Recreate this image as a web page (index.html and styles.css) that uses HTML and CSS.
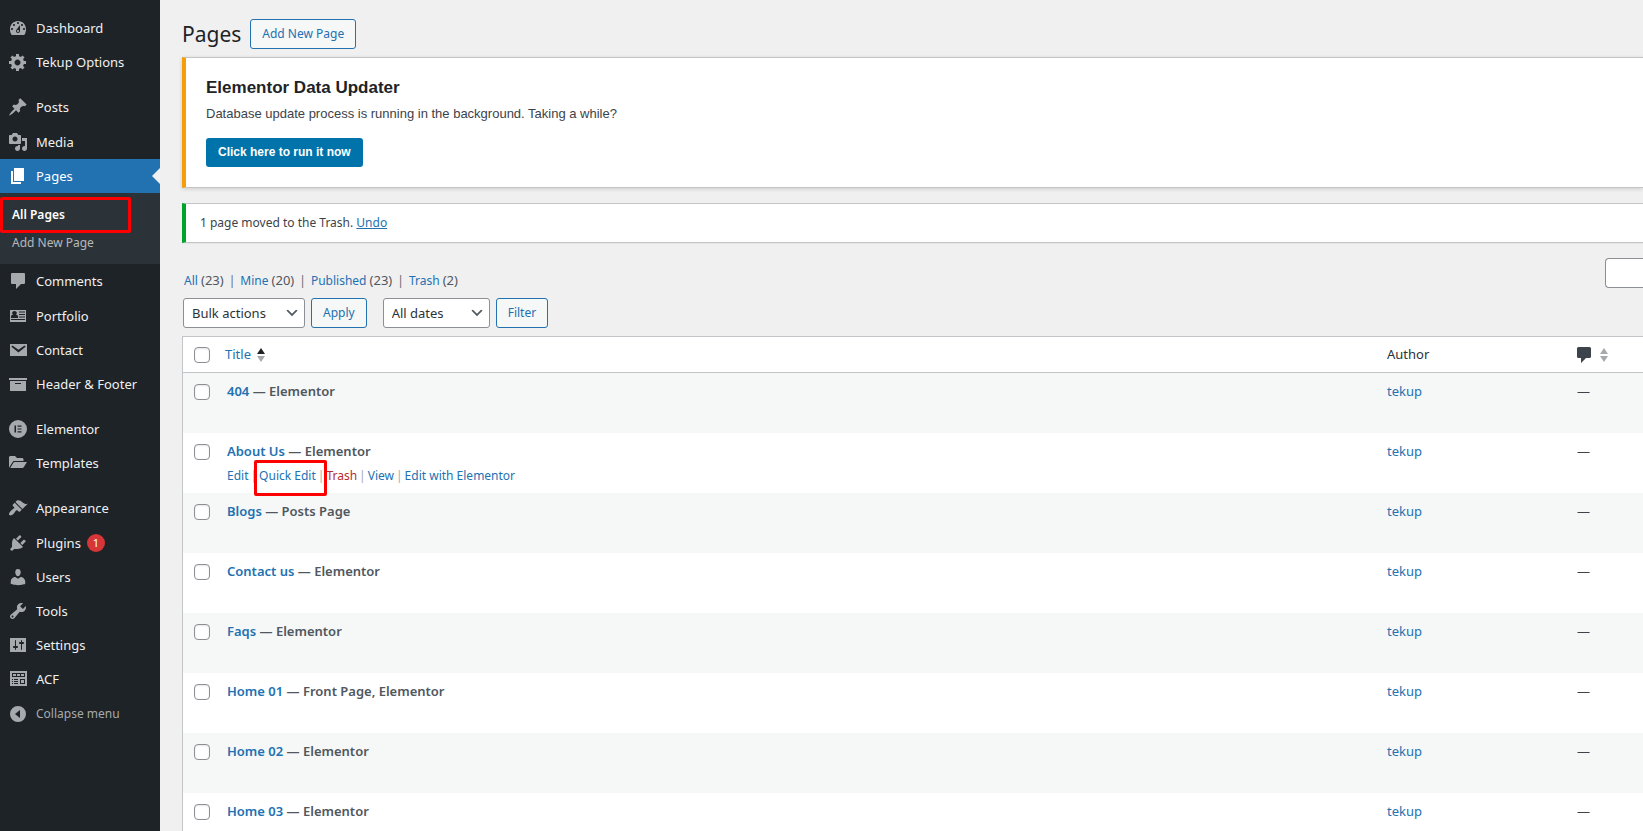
FILE: index.html
```html
<!DOCTYPE html>
<html lang="en">
<head>
<meta charset="utf-8">
<title>Pages</title>
<link rel="stylesheet" href="styles.css">
</head>
<body>
<div class="admin">
  <nav class="menu" aria-label="Main menu">
    <ul class="menu-group">
      <li><a class="menu-item" href="#"><svg class="icon" viewBox="0 0 20 20"><path fill-rule="evenodd" d="M3.76 17h12.48c1.34-1.63 1.76-3.48 1.76-6 0-4.42-3.58-8-8-8s-8 3.58-8 8c0 2.52.42 4.37 1.76 6zM10 4c.55 0 1 .45 1 1s-.45 1-1 1-1-.45-1-1 .45-1 1-1zM6 6c.55 0 1 .45 1 1s-.45 1-1 1-1-.45-1-1 .45-1 1-1zm8 0c.55 0 1 .45 1 1s-.45 1-1 1-1-.45-1-1 .45-1 1-1zm-5.37 5.55L12 7v6c0 1.1-.9 2-2 2s-2-.9-2-2c0-.57.24-1.08.63-1.45zM4 10c.55 0 1 .45 1 1s-.45 1-1 1-1-.45-1-1 .45-1 1-1zm12 0c.55 0 1 .45 1 1s-.45 1-1 1-1-.45-1-1 .45-1 1-1zm-5 3c0-.55-.45-1-1-1s-1 .45-1 1 .45 1 1 1 1-.45 1-1z"/></svg>Dashboard</a></li>
      <li><a class="menu-item" href="#"><svg class="icon" viewBox="0 0 20 20"><path fill-rule="evenodd" d="M18 12h-2.180c-.17.7-.44 1.35-.81 1.930l1.540 1.540-2.100 2.100-1.540-1.540c-.58.36-1.230.63-1.910.79V19H8v-2.180c-.68-.16-1.330-.43-1.910-.79l-1.540 1.540-2.120-2.120 1.540-1.540c-.36-.58-.63-1.230-.79-1.910H1V9.030h2.170c.16-.7.44-1.350.8-1.940L2.430 5.550l2.100-2.100 1.540 1.540c.58-.37 1.240-.64 1.930-.81V2h3v2.180c.68.16 1.330.43 1.910.79l1.540-1.540 2.120 2.120-1.540 1.540c.36.59.64 1.240.8 1.940H18V12zm-8.500 1.500c1.660 0 3-1.340 3-3s-1.340-3-3-3-3 1.340-3 3 1.340 3 3 3z"/></svg>Tekup Options</a></li>
    </ul>
    <ul class="menu-group">
      <li><a class="menu-item tall" href="#"><svg class="icon" viewBox="0 0 20 20"><path d="M10.440 3.020l1.820-1.820 6.360 6.350-1.830 1.820c-1.050-.68-2.480-.57-3.410.36l-.75.75c-.92.93-1.040 2.350-.35 3.410l-1.830 1.820-2.410-2.410-2.800 2.790c-.42.42-3.380 2.710-3.800 2.290s1.860-3.390 2.280-3.810l2.790-2.790L4.100 9.360l1.830-1.820c1.050.69 2.480.57 3.400-.36l.75-.75c.93-.92 1.050-2.350.36-3.410z"/></svg>Posts</a></li>
      <li><a class="menu-item" href="#"><svg class="icon" viewBox="0 0 20 20"><path fill-rule="evenodd" d="M13 11V4c0-.55-.45-1-1-1h-1.670L9 1H5L3.670 3H2c-.55 0-1 .45-1 1v7c0 .55.45 1 1 1h10c.55 0 1-.45 1-1zM7 4.500c1.380 0 2.500 1.120 2.500 2.500S8.380 9.500 7 9.500 4.500 8.380 4.500 7 5.620 4.500 7 4.500zM14 6h5v10.500c0 1.380-1.120 2.500-2.500 2.500S14 17.880 14 16.500s1.120-2.500 2.500-2.500c.17 0 .34.02.5.05V9h-3V6zm-4 8.050V13h2v3.500c0 1.380-1.120 2.500-2.500 2.500S7 17.880 7 16.500 8.120 14 9.500 14c.17 0 .34.02.5.05z"/></svg>Media</a></li>
      <li>
        <a class="menu-item current" href="#" aria-current="true"><svg class="icon" viewBox="0 0 20 20"><path d="M6 15V2h10v13H6zm-1 1h8v2H3V5h2v11z"/></svg>Pages</a>
        <ul class="submenu">
          <li><a class="submenu-item active marked" href="#">All Pages</a></li>
          <li><a class="submenu-item" href="#">Add New Page</a></li>
        </ul>
      </li>
      <li><a class="menu-item tall" href="#"><svg class="icon" viewBox="0 0 20 20"><path d="M4 2h12a1 1 0 0 1 1 1v9a1 1 0 0 1-1 1h-3l-5 5v-5H4a1 1 0 0 1-1-1V3a1 1 0 0 1 1-1z"/></svg>Comments</a></li>
      <li><a class="menu-item" href="#"><svg class="icon" viewBox="0 0 20 20"><path fill-rule="evenodd" d="M2 4h16v12H2zM11 5.500v1h6v-1zM11 8v1h6V8zM11 10.500v1h6v-1zM3 14h14v-1H3zM3 12h7v-1.500c0-1-1-1.700-2-1.700.6-.5.800-1.100.8-1.800C8.800 6 8.200 5 6.500 5S4.200 6 4.200 7c0 .7.200 1.300.8 1.800-1 0-2 .7-2 1.700z"/></svg>Portfolio</a></li>
      <li><a class="menu-item" href="#"><svg class="icon" viewBox="0 0 20 20"><path fill-rule="evenodd" d="M2 4h17v12H2zm8.490 8.600l6.740-5.530c.24-.2.43-.66.13-1.070-.29-.41-.82-.42-1.170-.17l-5.700 3.860L4.800 5.830c-.35-.25-.88-.24-1.170.17-.3.41-.11.87.13 1.070z"/></svg>Contact</a></li>
      <li><a class="menu-item" href="#"><svg class="icon" viewBox="0 0 20 20"><path fill-rule="evenodd" d="M19 4v2H1V4h18zM2 7h16v10H2V7zm11 3V9H7v1h6z"/></svg>Header &amp; Footer</a></li>
    </ul>
    <ul class="menu-group">
      <li><a class="menu-item" href="#"><svg class="icon" viewBox="0 0 20 20"><path fill-rule="evenodd" d="M10 1a9 9 0 1 0 0 18 9 9 0 0 0 0-18zM6.500 6.500H8v7H6.500zM9.500 6.500h4v1.200h-4zM9.500 9.400h4v1.200h-4zM9.500 12.300h4v1.200h-4z"/></svg>Elementor</a></li>
      <li><a class="menu-item" href="#"><svg class="icon" viewBox="0 0 20 20"><path d="M1 4.500C1 3.600 1.600 3 2.500 3H7l2 2h5c.9 0 1.500.6 1.500 1.500V8H6.500c-1 0-1.600.4-2 1.200L1 14.800z"/><path d="M6.700 9H19l-3.300 5.300c-.3.500-.7.700-1.300.7H2.200l3.200-5.300c.3-.5.700-.7 1.300-.7z"/></svg>Templates</a></li>
    </ul>
    <ul class="menu-group">
      <li><a class="menu-item tall" href="#"><svg class="icon" viewBox="0 0 20 20"><path d="M14.480 11.060L7.410 3.990l1.500-1.500c.5-.56 2.300-.47 3.510.32 1.210.8 1.430 1.280 2.910 2.100 1.180.64 2.450 1.260 4.450.85zm-.71.71L6.700 4.700 4.930 6.470c-.39.39-.39 1.020 0 1.410l1.060 1.060c.39.39.39 1.030 0 1.420-.6.6-1.430 1.110-2.210 1.690-.35.26-.7.53-1.010.84C1.430 14.230.4 16.080 1.400 17.070c.99 1 2.840-.03 4.180-1.360.31-.31.58-.66.85-1.020.57-.78 1.080-1.610 1.690-2.210.39-.39 1.020-.39 1.410 0l1.060 1.060c.39.39 1.020.39 1.410 0z"/></svg>Appearance</a></li>
      <li><a class="menu-item" href="#"><svg class="icon" viewBox="0 0 20 20"><path d="M13.110 4.360L9.870 7.600 8 5.730l3.240-3.240c.35-.34 1.050-.2 1.560.32.52.51.66 1.210.31 1.550zm-8 1.770l.91-1.120 9.010 9.010-1.190.84c-.71.71-2.630 1.160-3.820 1.160H6.140L4.900 17.260c-.59.59-1.540.59-2.120 0-.59-.58-.59-1.530 0-2.120l1.240-1.240v-3.880c0-1.130.4-3.190 1.090-3.890zm7.260 3.970l3.240-3.240c.34-.35 1.040-.21 1.550.31.52.51.66 1.210.31 1.550l-3.240 3.250z"/></svg>Plugins<span class="badge">1</span></a></li>
      <li><a class="menu-item" href="#"><svg class="icon" viewBox="0 0 20 20"><path d="M10 9.250c-2.270 0-2.730-3.440-2.730-3.440C7 4.020 7.820 2 9.970 2c2.160 0 2.980 2.020 2.710 3.810 0 0-.41 3.440-2.680 3.440zm0 2.570L12.720 10c2.390 0 4.520 2.330 4.520 4.530v2.490s-3.650 1.130-7.240 1.130c-3.650 0-7.240-1.130-7.240-1.130v-2.490c0-2.250 1.940-4.480 4.470-4.480z"/></svg>Users</a></li>
      <li><a class="menu-item" href="#"><svg class="icon" viewBox="0 0 20 20"><path fill-rule="evenodd" d="M16.680 9.770c-1.340 1.340-3.300 1.670-4.950.99l-5.410 6.520c-.99.99-2.590.99-3.580 0s-.99-2.590 0-3.570l6.520-5.420c-.68-1.650-.35-3.610.99-4.950 1.280-1.280 3.120-1.620 4.720-1.060l-2.890 2.890 2.820 2.820 2.860-2.870c.53 1.580.18 3.390-1.080 4.650zM3.810 16.210c.4.39 1.040.39 1.430 0 .4-.4.4-1.040 0-1.430-.39-.4-1.030-.4-1.430 0-.39.39-.39 1.030 0 1.430z"/></svg>Tools</a></li>
      <li><a class="menu-item" href="#"><svg class="icon" viewBox="0 0 20 20"><path fill-rule="evenodd" d="M18 17V3H2v14zM8 11h1c.55 0 1 .45 1 1s-.45 1-1 1H8v1.500c0 .28-.22.5-.5.5s-.5-.22-.5-.5V13H6c-.55 0-1-.45-1-1s.45-1 1-1h1V5.500c0-.28.22-.5.5-.5s.5.22.5.5V11zm5-2h-1c-.55 0-1-.45-1-1s.45-1 1-1h1V5.500c0-.28.22-.5.5-.5s.5.22.5.5V7h1c.55 0 1 .45 1 1s-.45 1-1 1h-1v5.500c0 .28-.22.5-.5.5s-.5-.22-.5-.5V9z"/></svg>Settings</a></li>
      <li><a class="menu-item tall" href="#"><svg class="icon" viewBox="0 0 20 20"><path fill-rule="evenodd" d="M2 2h17v15H2zM4 4v4h13V4zM5 5h3v2H5zM9 5h3v2H9zM13 5h3v2h-3zM4 10v1h1v-1zM6 10v1h4v-1zM4 12v1h1v-1zM6 12v1h4v-1zM4 14v1h1v-1zM6 14v1h4v-1zM12 10v5h5v-5zM13 11h3v3h-3z"/></svg>ACF</a></li>
      <li><button class="menu-item collapse" type="button"><svg class="icon" viewBox="0 0 20 20"><path fill-rule="evenodd" d="M10 2a8 8 0 1 0 0 16 8 8 0 0 0 0-16zM12 6v8l-5-4z"/></svg>Collapse menu</button></li>
    </ul>
  </nav>

  <main class="content">
    <header class="heading">
      <h1>Pages</h1>
      <a class="button" href="#">Add New Page</a>
    </header>

    <section class="notice notice-warning">
      <h2>Elementor Data Updater</h2>
      <p>Database update process is running in the background. Taking a while?</p>
      <a class="button-primary" href="#">Click here to run it now</a>
    </section>
    <section class="notice notice-success">
      <p>1 page moved to the Trash. <a href="#">Undo</a></p>
    </section>

    <div class="toolbar">
      <ul class="views">
        <li><a href="#">All <span class="count">(23)</span></a></li>
        <li><a href="#">Mine <span class="count">(20)</span></a></li>
        <li><a href="#">Published <span class="count">(23)</span></a></li>
        <li><a href="#">Trash <span class="count">(2)</span></a></li>
      </ul>
      <input class="search" type="search" aria-label="Search pages">
    </div>
    <form class="filters">
      <div class="select select-bulk"><select aria-label="Bulk actions"><option>Bulk actions</option></select><svg viewBox="0 0 20 20"><path d="M5 6l5 5 5-5 2 1-7 7-7-7 2-1z"/></svg></div>
      <button class="button" type="button">Apply</button>
      <div class="select select-dates"><select aria-label="Filter by date"><option>All dates</option></select><svg viewBox="0 0 20 20"><path d="M5 6l5 5 5-5 2 1-7 7-7-7 2-1z"/></svg></div>
      <button class="button" type="button">Filter</button>
    </form>

    <table class="pages">
      <thead>
        <tr>
          <th class="col-check"><input type="checkbox" aria-label="Select all"></th>
          <th class="col-title"><a class="sort" href="#">Title<svg class="arrows" viewBox="0 0 8 14"><path class="on" d="M0 6l4-6 4 6z"/><path d="M0 8h8l-4 6z"/></svg></a></th>
          <th class="col-author">Author</th>
          <th class="col-comments"><a class="sort" href="#" aria-label="Comments"><svg class="bubble" viewBox="0 0 14 16"><path d="M1.500 0h11A1.500 1.500 0 0 1 14 1.500v8a1.500 1.500 0 0 1-1.500 1.500H9l-5 5v-5H1.500A1.500 1.500 0 0 1 0 9.500v-8A1.500 1.500 0 0 1 1.500 0z"/></svg><svg class="arrows" viewBox="0 0 8 14"><path d="M0 6l4-6 4 6z"/><path d="M0 8h8l-4 6z"/></svg></a></th>
        </tr>
      </thead>
      <tbody>
        <tr><td class="col-check"><input type="checkbox" aria-label="Select 404"></td><td class="col-title"><strong><a href="#">404</a> — Elementor</strong></td><td class="col-author"><a href="#">tekup</a></td><td class="col-comments">—</td></tr>
        <tr>
          <td class="col-check"><input type="checkbox" aria-label="Select About Us"></td>
          <td class="col-title"><strong><a href="#">About Us</a> — Elementor</strong>
            <ul class="actions">
              <li><a href="#">Edit</a></li>
              <li><a class="marked" href="#">Quick Edit</a></li>
              <li><a class="danger" href="#">Trash</a></li>
              <li><a href="#">View</a></li>
              <li><a href="#">Edit with Elementor</a></li>
            </ul>
          </td>
          <td class="col-author"><a href="#">tekup</a></td>
          <td class="col-comments">—</td>
        </tr>
        <tr><td class="col-check"><input type="checkbox" aria-label="Select Blogs"></td><td class="col-title"><strong><a href="#">Blogs</a> — Posts Page</strong></td><td class="col-author"><a href="#">tekup</a></td><td class="col-comments">—</td></tr>
        <tr><td class="col-check"><input type="checkbox" aria-label="Select Contact us"></td><td class="col-title"><strong><a href="#">Contact us</a> — Elementor</strong></td><td class="col-author"><a href="#">tekup</a></td><td class="col-comments">—</td></tr>
        <tr><td class="col-check"><input type="checkbox" aria-label="Select Faqs"></td><td class="col-title"><strong><a href="#">Faqs</a> — Elementor</strong></td><td class="col-author"><a href="#">tekup</a></td><td class="col-comments">—</td></tr>
        <tr><td class="col-check"><input type="checkbox" aria-label="Select Home 01"></td><td class="col-title"><strong><a href="#">Home 01</a> — Front Page, Elementor</strong></td><td class="col-author"><a href="#">tekup</a></td><td class="col-comments">—</td></tr>
        <tr><td class="col-check"><input type="checkbox" aria-label="Select Home 02"></td><td class="col-title"><strong><a href="#">Home 02</a> — Elementor</strong></td><td class="col-author"><a href="#">tekup</a></td><td class="col-comments">—</td></tr>
        <tr><td class="col-check"><input type="checkbox" aria-label="Select Home 03"></td><td class="col-title"><strong><a href="#">Home 03</a> — Elementor</strong></td><td class="col-author"><a href="#">tekup</a></td><td class="col-comments">—</td></tr>
      </tbody>
    </table>
  </main>
</div>
</body>
</html>
```
FILE: styles.css
```css
*, *::before, *::after { box-sizing: border-box; }

body {
  margin: 0;
  height: 100vh;
  overflow: hidden;
  background: #f0f0f1;
  color: #3c434a;
  font: 13px/20px "Noto Sans", "Open Sans", sans-serif;
}

ul { margin: 0; padding: 0; list-style: none; }
a { color: #2271b1; text-decoration: none; }
h1, h2, p { margin: 0; }

.admin { display: flex; min-height: 100vh; }

/* Side menu */
.menu { flex: none; width: 160px; padding-top: 11px; background: #1d2327; }
.menu-group + .menu-group { margin-top: 11px; }

.menu-item {
  position: relative;
  display: flex;
  align-items: center;
  width: 100%;
  height: 34px;
  padding: 0 8px;
  border: 0;
  background: none;
  color: #f0f0f1;
  font: 13px/18px "Noto Sans", "Open Sans", sans-serif;
  white-space: nowrap;
}
.menu-item.tall { height: 35px; padding-bottom: 1px; }
.menu-item.collapse { color: #a7aaad; font-size: 12px; }

.icon { flex: none; width: 20px; height: 20px; margin-right: 8px; fill: #a7aaad; }

.current { background: #2271b1; color: #fff; }
.current .icon { fill: #fff; }
.current::after {
  content: "";
  position: absolute;
  top: 9px;
  right: 0;
  border: 8px solid transparent;
  border-left: 0;
  border-right-color: #f0f0f1;
}

.submenu { padding: 8px 0 7px; background: #2c3338; }
.submenu-item {
  position: relative;
  display: block;
  padding: 4px 12px;
  color: #b4b9be;
  font-size: 12px;
}
.submenu-item.active { color: #fff; font-weight: 600; }
.submenu-item.marked::after {
  content: "";
  position: absolute;
  top: -4px;
  left: 0;
  width: 131px;
  height: 36px;
  border: 3px solid #f00;
  border-radius: 2px;
}

.badge {
  width: 18px;
  height: 18px;
  margin-left: 6px;
  border-radius: 9px;
  background: #d63638;
  color: #fff;
  font-size: 11px;
  text-align: center;
}

/* Content */
.content { flex: 1; min-width: 0; padding: 19px 0 0 22px; }

.heading { display: flex; align-items: center; gap: 9px; margin-bottom: 8px; }
.heading h1 { color: #1d2327; font-size: 21px; line-height: 30px; font-weight: 400; }

.button {
  display: inline-block;
  height: 30px;
  padding: 0 11px;
  border: 1px solid #2271b1;
  border-radius: 3px;
  background: #f6f7f7;
  color: #2271b1;
  font: 12px/28px "Noto Sans", "Open Sans", sans-serif;
}

.notice {
  border: 1px solid #c3c4c7;
  border-right: 0;
  border-left: 4px solid;
  background: #fff;
  box-shadow: 0 1px 1px rgba(0, 0, 0, 0.04);
}
.notice-warning {
  padding: 19px 20px 20px;
  border-left-color: #f59e0b;
  box-shadow: 0 1px 4px rgba(0, 0, 0, 0.15);
  font-family: "Liberation Sans", Arial, sans-serif;
}
.notice-warning h2 { color: #1d2327; font-size: 17px; line-height: 22px; }
.notice-warning p { margin: 5px 0 14px; }
.button-primary {
  display: inline-block;
  padding: 0 12px;
  border-radius: 3px;
  background: #0073aa;
  color: #fff;
  font-size: 12px;
  font-weight: 700;
  line-height: 29px;
  vertical-align: top;
}
.notice-success { margin-top: 15px; padding: 9px 14px; border-left-color: #00a32a; font-size: 12px; }
.notice-success a { text-decoration: underline; }

.toolbar { display: flex; justify-content: space-between; margin: 15px 0 9px; }
.views { display: flex; padding: 14px 0 0 2px; font-size: 12px; line-height: 16px; }
.views li + li::before { content: "|"; margin: 0 5px; color: #646970; }
.count { color: #50575e; font-size: 13px; }
.search {
  width: 38px;
  height: 30px;
  border: 1px solid #8c8f94;
  border-right: 0;
  border-radius: 4px 0 0 4px;
  background: #fff;
}

.filters { display: flex; gap: 6px; margin-bottom: 8px; padding-left: 1px; }
.select { position: relative; }
.select svg { position: absolute; top: 7px; right: 5px; width: 16px; height: 16px; fill: #50575e; pointer-events: none; }
.select select {
  appearance: none;
  width: 100%;
  height: 30px;
  padding: 0 24px 0 8px;
  border: 1px solid #8c8f94;
  border-radius: 3px;
  background: #fff;
  color: #2c3338;
  font: 13px/28px "Noto Sans", "Open Sans", sans-serif;
}
.select-bulk { width: 122px; }
.select-dates { width: 107px; margin-left: 10px; }

/* Table */
.pages {
  width: 100%;
  border: 1px solid #c3c4c7;
  border-right: 0;
  border-spacing: 0;
  background: #fff;
  table-layout: fixed;
}
.pages th, .pages td { padding: 8px 10px; text-align: left; vertical-align: top; }
.pages th { border-bottom: 1px solid #c3c4c7; font-weight: 400; color: #2c3338; line-height: 19px; }
.pages tbody tr { height: 60px; }
.pages tbody tr:nth-child(odd) { background: #f6f7f7; }
.pages .col-check { width: 34px; padding: 11px 0 0 11px; line-height: 0; }
.pages th.col-check { padding-top: 10px; }
.pages th.col-title { padding-left: 8px; }
.col-author { width: 190px; }
.col-comments { width: 76px; }
.pages strong { color: #50575e; font-weight: 600; }

.pages input {
  appearance: none;
  width: 16px;
  height: 16px;
  margin: 0;
  border: 1px solid #8c8f94;
  border-radius: 4px;
  background: #fff;
  box-shadow: inset 0 1px 2px rgba(0, 0, 0, 0.1);
}

.sort { display: flex; align-items: center; gap: 6px; min-height: 19px; }
.arrows { width: 8px; height: 14px; fill: #a7aaad; }
.arrows .on { fill: #1d2327; }
.bubble { width: 14px; height: 16px; fill: #3c434a; margin-right: 3px; }

.actions { display: flex; margin-top: 6px; color: #a7aaad; font-size: 12px; line-height: 18px; }
.actions li + li::before { content: "|"; margin: 0 2px; }
.actions .danger { color: #b32d2e; }
.actions .marked { position: relative; }
.actions .marked::after {
  content: "";
  position: absolute;
  top: -7px;
  left: -5px;
  width: 73px;
  height: 36px;
  border: 3px solid #f00;
  border-radius: 2px;
}
```
